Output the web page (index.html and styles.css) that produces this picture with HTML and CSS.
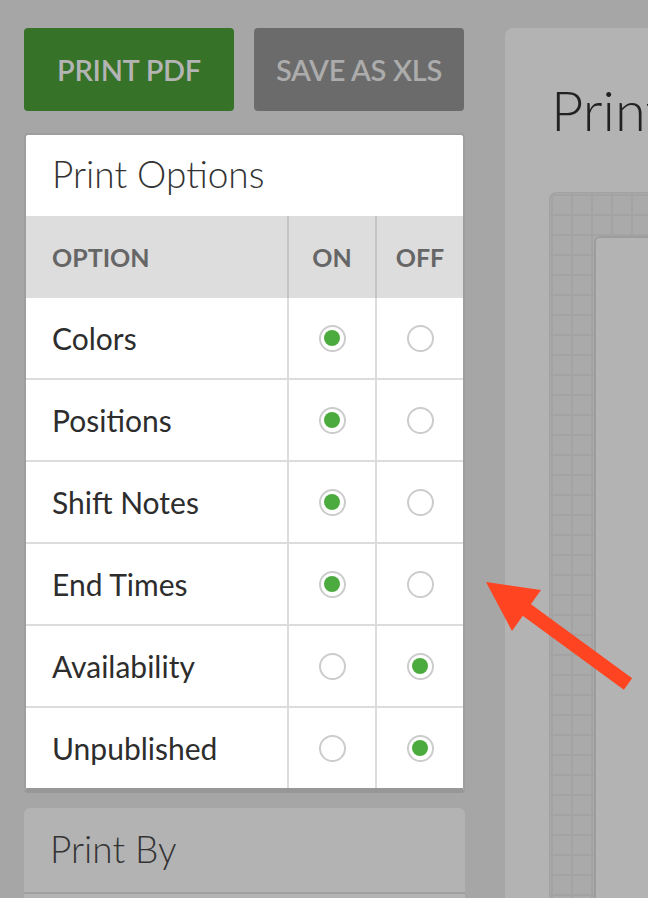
FILE: index.html
```html
<!DOCTYPE html>
<html>
<head>
<meta charset="utf-8">
<link rel="stylesheet" href="styles.css">
</head>
<body>
<div class="page">
  <div class="left">
    <div class="btns">
      <div class="btn btn-green">PRINT PDF</div>
      <div class="btn btn-gray">SAVE AS XLS</div>
    </div>
    <div class="card">
      <div class="card-title">Print Options</div>
      <div class="row head">
        <div class="c c1">OPTION</div>
        <div class="c c2">ON</div>
        <div class="c c3">OFF</div>
      </div>
      <div class="row">
        <div class="c c1">Colors</div>
        <div class="c c2"><span class="radio on"></span></div>
        <div class="c c3"><span class="radio"></span></div>
      </div>
      <div class="row">
        <div class="c c1">Positions</div>
        <div class="c c2"><span class="radio on"></span></div>
        <div class="c c3"><span class="radio"></span></div>
      </div>
      <div class="row">
        <div class="c c1">Shift Notes</div>
        <div class="c c2"><span class="radio on"></span></div>
        <div class="c c3"><span class="radio"></span></div>
      </div>
      <div class="row">
        <div class="c c1">End Times</div>
        <div class="c c2"><span class="radio on"></span></div>
        <div class="c c3"><span class="radio"></span></div>
      </div>
      <div class="row">
        <div class="c c1">Availability</div>
        <div class="c c2"><span class="radio"></span></div>
        <div class="c c3"><span class="radio on"></span></div>
      </div>
      <div class="row last">
        <div class="c c1">Unpublished</div>
        <div class="c c2"><span class="radio"></span></div>
        <div class="c c3"><span class="radio on"></span></div>
      </div>
    </div>
    <div class="card2">
      <div class="card2-title">Print By</div>
    </div>
  </div>
  <div class="right">
    <div class="big">Print</div>
    <div class="gridarea">
      <div class="paper"></div>
    </div>
  </div>
</div>
<svg class="arrow" width="648" height="898" viewBox="0 0 648 898">
  <polygon points="486,582 541,590 512,631" fill="#ff4422"/>
  <line x1="520" y1="605" x2="628" y2="684" stroke="#ff4422" stroke-width="14"/>
</svg>
</body>
</html>
```

FILE: styles.css
```css
html, body {
  margin: 0;
  padding: 0;
  height: 898px;
  overflow: hidden;
  background: #a6a6a6;
  font-family: Lato, "Liberation Sans", sans-serif;
}
.page {
  display: flex;
  padding: 28px 0 0 24px;
  gap: 40px;
}
.left {
  width: 441px;
  flex: none;
  display: flex;
  flex-direction: column;
}
.btns {
  display: flex;
  gap: 20px;
}
.btn {
  width: 210px;
  height: 83px;
  border-radius: 4px;
  display: flex;
  align-items: center;
  justify-content: center;
  font-size: 29px;
  font-weight: 600;
  color: #adadad;
  letter-spacing: -0.3px;
}
.btn-green { background: #377229; color: #b4b4b4; }
.btn-gray { background: #6b6b6b; color: #acacac; }

.card {
  margin-top: 22px;
  border: 2px solid #9e9e9e;
  border-bottom: 5px solid #979797;
  border-radius: 4px;
  background: #fff;
  overflow: hidden;
}
.card-title {
  padding: 21px 0 24px 26px;
  font-size: 37px;
  line-height: 36px;
  font-weight: 300;
  color: #333;
}
.row {
  display: grid;
  grid-template-columns: 261px 88px 88px;
  height: 82px;
  box-sizing: border-box;
  border-bottom: 2px solid #dcdcdc;
}
.row.last { height: 80px; border-bottom: none; }
.row.head {
  background: #dddddd;
  border-bottom: none;
}
.c {
  display: flex;
  align-items: center;
  box-sizing: border-box;
  font-size: 30px;
  color: #2d2d2d;
}
.c1 { padding-left: 26px; }
.c2, .c3 {
  justify-content: center;
  border-left: 2px solid #dcdcdc;
}
.head .c {
  font-size: 25px;
  font-weight: 700;
  color: #666;
}
.head .c2, .head .c3 { border-left-color: #c4c4c4; }
.radio {
  width: 27px;
  height: 27px;
  box-sizing: border-box;
  border: 2px solid #cccccc;
  border-radius: 50%;
  background: #fff;
  display: flex;
  align-items: center;
  justify-content: center;
}
.radio.on::after {
  content: "";
  width: 16px;
  height: 16px;
  border-radius: 50%;
  background: #4cab3f;
}
.card2 {
  margin-top: 15px;
  background: #b3b3b3;
  border-radius: 6px 6px 0 0;
  height: 200px;
}
.card2-title {
  padding: 24px 0 26px 26px;
  font-size: 37px;
  line-height: 34px;
  font-weight: 300;
  color: #333;
  border-bottom: 2px solid #a0a0a0;
}
.right {
  flex: none;
  width: 600px;
  height: 1000px;
  background: #b3b3b3;
  border-radius: 8px 0 0 0;
  padding: 54px 0 0 44px;
  box-sizing: border-box;
}
.big {
  font-size: 56px;
  line-height: 56px;
  font-weight: 300;
  color: #222;
  padding-left: 2px;
}
.gridarea {
  margin-top: 54px;
  height: 900px;
  border-radius: 7px 0 0 0;
  background-color: #aaaaaa;
  background-image:
    linear-gradient(to right, #a3a3a3 2px, transparent 2px),
    linear-gradient(to bottom, #a3a3a3 2px, transparent 2px);
  background-size: 20px 20px;
  background-position: 21px 21px;
  padding: 43px 0 0 44px;
  box-sizing: border-box;
  border: 1px solid #a2a2a2;
}
.paper {
  height: 900px;
  background: #b3b3b3;
  border: 2px solid #9d9d9d;
  border-radius: 6px 0 0 0;
}
.arrow {
  position: absolute;
  left: 0;
  top: 0;
}
```
